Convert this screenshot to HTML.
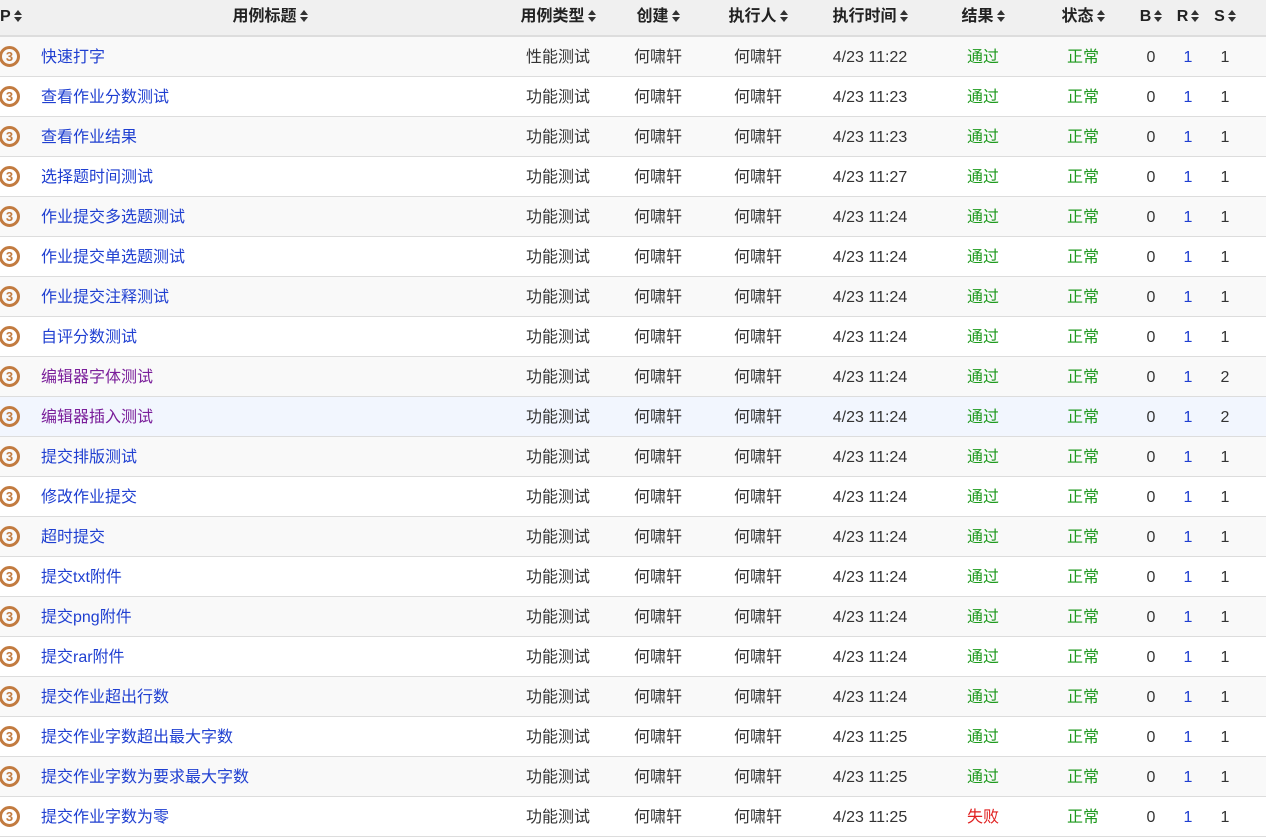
<!DOCTYPE html>
<html><head><meta charset="utf-8"><style>
*{margin:0;padding:0;box-sizing:border-box}
body{width:1266px;height:840px;background:#fff;font-family:"Liberation Sans","Noto Sans CJK SC",sans-serif;font-size:16px;color:#333;overflow:hidden}
.r{display:flex;height:40px;border-bottom:1px solid #ddd}
.h{height:37px;background:#f0f0f0;border-bottom:2px solid #ddd;font-weight:bold;color:#222}
.r>div{text-align:center;white-space:nowrap;line-height:41px;height:39px}
.h>div{line-height:33px}
.r:nth-child(even){background:#f9f9f9}
.r.hl{background:#f2f6fe}
.c0{width:30px;text-align:left!important;padding-left:0}
.c1{width:480px}
.r:not(.h) .c1{text-align:left!important;padding-left:11px;color:#1f3fd1}
.c2{width:96px}.c3{width:104px}.c4{width:96px}.c5{width:128px}.c6{width:98px}.c7{width:102px}.c8{width:34px}.c9{width:40px}.c10{width:34px}
.s{display:inline-block;width:8px;height:12px;margin-left:3px;vertical-align:-1px;position:relative}
.s:before,.s:after{content:"";position:absolute;left:0;border-left:4px solid transparent;border-right:4px solid transparent}
.s:before{top:0;border-bottom:5px solid #333}.s:after{bottom:0;border-top:5px solid #333}
.ic{display:inline-block;width:21px;height:21px;border:3px solid #c27b40;border-radius:50%;color:#c27b40;font-weight:bold;font-size:13px;line-height:15px;text-align:center;margin-left:-1px;vertical-align:middle;margin-top:-3px}
.g{color:#1e9a1e}.red{color:#e02020}.b{color:#1f3fd1}
.v{color:#7a1e9a!important}
</style></head><body>
<div class="r h"><div class="c0">P<span class="s"></span></div><div class="c1">用例标题<span class="s"></span></div><div class="c2">用例类型<span class="s"></span></div><div class="c3">创建<span class="s"></span></div><div class="c4">执行人<span class="s"></span></div><div class="c5">执行时间<span class="s"></span></div><div class="c6">结果<span class="s"></span></div><div class="c7">状态<span class="s"></span></div><div class="c8">B<span class="s"></span></div><div class="c9">R<span class="s"></span></div><div class="c10">S<span class="s"></span></div></div>
<div id="rows"></div>
<script>
var d=[["快速打字","性能测试","11:22","1"],["查看作业分数测试","功能测试","11:23","1"],["查看作业结果","功能测试","11:23","1"],["选择题时间测试","功能测试","11:27","1"],["作业提交多选题测试","功能测试","11:24","1"],["作业提交单选题测试","功能测试","11:24","1"],["作业提交注释测试","功能测试","11:24","1"],["自评分数测试","功能测试","11:24","1"],["编辑器字体测试","功能测试","11:24","2"],["编辑器插入测试","功能测试","11:24","2"],["提交排版测试","功能测试","11:24","1"],["修改作业提交","功能测试","11:24","1"],["超时提交","功能测试","11:24","1"],["提交txt附件","功能测试","11:24","1"],["提交png附件","功能测试","11:24","1"],["提交rar附件","功能测试","11:24","1"],["提交作业超出行数","功能测试","11:24","1"],["提交作业字数超出最大字数","功能测试","11:25","1"],["提交作业字数为要求最大字数","功能测试","11:25","1"],["提交作业字数为零","功能测试","11:25","1"]];
var h="";d.forEach(function(x,i){h+='<div class="r'+(i==9?' hl':'')+'"><div class="c0"><span class="ic">3</span></div><div class="c1'+(i==8||i==9?' v':'')+'">'+x[0]+'</div><div class="c2">'+x[1]+'</div><div class="c3">何啸轩</div><div class="c4">何啸轩</div><div class="c5">4/23 '+x[2]+'</div><div class="c6 '+(i==19?'red':'g')+'">'+(i==19?'失败':'通过')+'</div><div class="c7 g">正常</div><div class="c8">0</div><div class="c9 b">1</div><div class="c10">'+x[3]+'</div></div>'});
document.getElementById("rows").outerHTML=h;
</script>
</body></html>
